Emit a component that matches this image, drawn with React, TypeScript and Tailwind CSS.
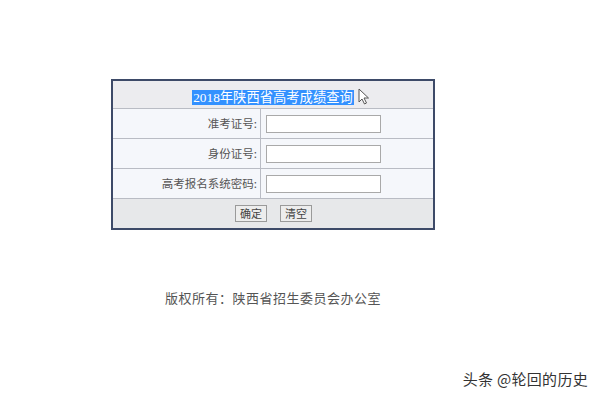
import React from 'react';

const fields = ['准考证号:', '身份证号:', '高考报名系统密码:'];

const Cursor: React.FC = () => (
  <svg width="13" height="17" viewBox="0 0 13 17" className="absolute left-[166px] top-[5px]">
    <path d="M1 1 L1 14 L4 11 L6.5 16 L8.5 15 L6 10 L10.5 10 Z" fill="#fff" stroke="#555" strokeWidth="1" strokeLinejoin="round" />
  </svg>
);

export default function App() {
  return (
    <div
      className="w-[600px] h-[400px] bg-white overflow-hidden flex flex-col"
      style={{ fontFamily: '"Noto Sans CJK SC", sans-serif' }}
    >
      <div className="ml-[111px] mt-[79px] w-[324px] border-2 border-[#3d4a68] bg-[#f5f7fb]">
        {/* title */}
        <div className="h-[28px] bg-[#ececef] border-b border-[#b9bcc4] flex items-center justify-center">
          <div className="relative">
            <span
              className="bg-[#3391ff] text-white text-[13.3px] leading-[17px] px-[1px]"
              style={{ fontFamily: '"Liberation Serif", "Noto Sans CJK SC", serif' }}
            >
              2018年陕西省高考成绩查询
            </span>
            <Cursor />
          </div>
        </div>

        {fields.map((f) => (
          <div key={f} className="h-[30px] flex border-b border-[#b9bcc4]">
            <div className="w-[148px] flex items-center justify-end pr-[3px] text-[11.5px] text-[#555] border-r border-[#b9bcc4]">
              {f}
            </div>
            <div className="flex items-center pl-[5px]">
              <div className="w-[115px] h-[18px] bg-white border border-[#a9a9a9]" />
            </div>
          </div>
        ))}

        {/* buttons */}
        <div className="h-[29px] bg-[#e7e8ea] flex items-center justify-center gap-[13px] pl-[1px]">
          <div className="h-[17px] px-[4px] flex items-center border border-[#9a9a9a] bg-[#ededed] text-[11px] text-[#444]">
            确定
          </div>
          <div className="h-[17px] px-[4px] flex items-center border border-[#9a9a9a] bg-[#ededed] text-[11px] text-[#444]">
            清空
          </div>
        </div>
      </div>

      <div className="ml-[165px] mt-[58px] text-[13px] text-[#555] tracking-[0.5px]">
        版权所有：陕西省招生委员会办公室
      </div>

      <div className="self-end mr-[12px] mt-[60px] text-[15px] text-[#333] tracking-[0.3px]">
        头条 @轮回的历史
      </div>
    </div>
  );
}
